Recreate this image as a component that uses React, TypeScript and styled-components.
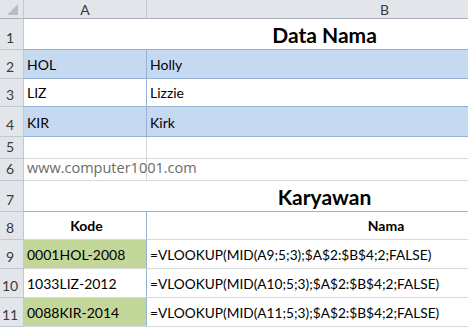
import React from 'react';
import styled, { createGlobalStyle, css } from 'styled-components';

// GLOBAL

const GlobalStyle = createGlobalStyle`
  html, body {
    margin: 0;
    padding: 0;
    background: #ffffff;
    overflow: hidden;
  }
  body {
    font-family: Lato, "Liberation Sans", sans-serif;
  }
`;

// PALETTE

const colors = {
    headerBg: '#e2e5ea',
    headerLine: '#c3c8cf',
    headerBottom: '#a9b0b9',
    headerText: '#3a3a3a',
    grid: '#d9d9d9',
    blueLine: '#95b3d7',
    blueFill: '#c5d9f1',
    greenFill: '#c4d79b',
};

type Line = 'blue' | 'grid' | 'none';
type Fill = 'blue' | 'green' | 'none';

const lineColor = (line: Line = 'grid') =>
    line === 'blue' ? colors.blueLine : line === 'none' ? 'transparent' : colors.grid;

const fillColor = (fill: Fill = 'none') =>
    fill === 'blue' ? colors.blueFill : fill === 'green' ? colors.greenFill : '#ffffff';

// STYLED COMPONENTS

// the window only shows part of column B
const Viewport = styled.div`
  width: 100vw;
  height: 100vh;
  overflow: hidden;
`;

const Sheet = styled.div`
  display: flex;
  flex-direction: column;
  width: 623px;
`;

const Row = styled.div<{ $height: number }>`
  display: grid;
  grid-template-columns: 24px 123px 476px;
  height: ${(p) => p.$height}px;
`;

const CornerCell = styled.div`
  box-sizing: border-box;
  background: ${colors.headerBg};
  border-right: 1px solid ${colors.headerLine};
  border-bottom: 1px solid ${colors.headerBottom};
  display: flex;
  align-items: flex-end;
  justify-content: flex-end;
  padding: 0 5px 3px 0;
`;

const ColHeader = styled.div`
  box-sizing: border-box;
  background: ${colors.headerBg};
  border-right: 1px solid ${colors.headerLine};
  border-bottom: 1px solid ${colors.headerBottom};
  display: flex;
  align-items: center;
  justify-content: center;
  color: ${colors.headerText};
  font-size: 14px;
  padding-top: 1px;
`;

const RowHead = styled.div`
  box-sizing: border-box;
  background: ${colors.headerBg};
  border-right: 1px solid ${colors.headerLine};
  border-bottom: 1px solid ${colors.headerLine};
  display: flex;
  align-items: flex-end;
  justify-content: center;
  padding: 0 3px 4px 0;
  color: ${colors.headerText};
  font-size: 14px;
  line-height: 1;
`;

const Cell = styled.div<{
    $fill?: Fill;
    $right?: Line;
    $bottom?: Line;
    $span?: boolean;
    $center?: boolean;
    $bold?: boolean;
}>`
  box-sizing: border-box;
  display: flex;
  align-items: flex-end;
  justify-content: ${(p) => (p.$center ? 'center' : 'flex-start')};
  padding: 0 0 6px 3px;
  background: ${(p) => fillColor(p.$fill)};
  border-right: 1px solid ${(p) => lineColor(p.$right)};
  border-bottom: 1px solid ${(p) => lineColor(p.$bottom)};
  color: #000000;
  font-size: 14px;
  line-height: 1;
  white-space: nowrap;
  ${(p) => p.$span && css`grid-column: span 2;`}
  ${(p) => p.$bold && css`font-weight: 700;`}
`;

const Formula = styled.span`
  font-size: 13.7px;
`;

const Title = styled.span`
  font-size: 21px;
  font-weight: 700;
  margin-bottom: -2px;
`;

// spills over the empty neighbour cell, as a sheet does with long text
const Link = styled.span`
  position: relative;
  z-index: 1;
  font-family: "Open Sans", "Liberation Sans", sans-serif;
  font-size: 14.5px;
  color: #6b6b6b;
  margin-bottom: -1px;
`;

// DATA

const names = [
    { code: 'HOL', name: 'Holly', fill: 'blue' as Fill },
    { code: 'LIZ', name: 'Lizzie', fill: 'none' as Fill },
    { code: 'KIR', name: 'Kirk', fill: 'blue' as Fill },
];

const employees = [
    { code: '0001HOL-2008', fill: 'green' as Fill },
    { code: '1033LIZ-2012', fill: 'none' as Fill },
    { code: '0088KIR-2014', fill: 'green' as Fill },
];

const nameRowHeights = [29, 28, 30];

const SelectAllMark = () => (
    <svg width="11" height="11" viewBox="0 0 11 11">
        <polygon points="11,0 11,11 0,11" fill="#b9bec5" />
    </svg>
);

const App = () => (
    <>
        <GlobalStyle />
        <Viewport>
            <Sheet>
                <Row $height={19}>
                    <CornerCell>
                        <SelectAllMark />
                    </CornerCell>
                    <ColHeader>A</ColHeader>
                    <ColHeader>B</ColHeader>
                </Row>

                <Row $height={31}>
                    <RowHead>1</RowHead>
                    <Cell $span $center $bottom="blue">
                        <Title>Data Nama</Title>
                    </Cell>
                </Row>

                {names.map((item, i) => (
                    <Row $height={nameRowHeights[i]} key={item.code}>
                        <RowHead>{i + 2}</RowHead>
                        <Cell $fill={item.fill} $right="blue" $bottom="blue">{item.code}</Cell>
                        <Cell $fill={item.fill} $right="none" $bottom="blue">{item.name}</Cell>
                    </Row>
                ))}

                <Row $height={22}>
                    <RowHead>5</RowHead>
                    <Cell />
                    <Cell $right="none" />
                </Row>

                <Row $height={22}>
                    <RowHead>6</RowHead>
                    <Cell>
                        <Link>www.computer1001.com</Link>
                    </Cell>
                    <Cell $right="none" />
                </Row>

                <Row $height={31}>
                    <RowHead>7</RowHead>
                    <Cell $span $center $bottom="blue">
                        <Title>Karyawan</Title>
                    </Cell>
                </Row>

                <Row $height={28}>
                    <RowHead>8</RowHead>
                    <Cell $center $bold $right="blue">Kode</Cell>
                    <Cell $center $bold $right="none">Nama</Cell>
                </Row>

                {employees.map((item, i) => (
                    <Row $height={29} key={item.code}>
                        <RowHead>{i + 9}</RowHead>
                        <Cell $fill={item.fill} $right="blue">{item.code}</Cell>
                        <Cell $right="none">
                            <Formula>=VLOOKUP(MID(A{i + 9};5;3);$A$2:$B$4;2;FALSE)</Formula>
                        </Cell>
                    </Row>
                ))}
            </Sheet>
        </Viewport>
    </>
);

export default App;
